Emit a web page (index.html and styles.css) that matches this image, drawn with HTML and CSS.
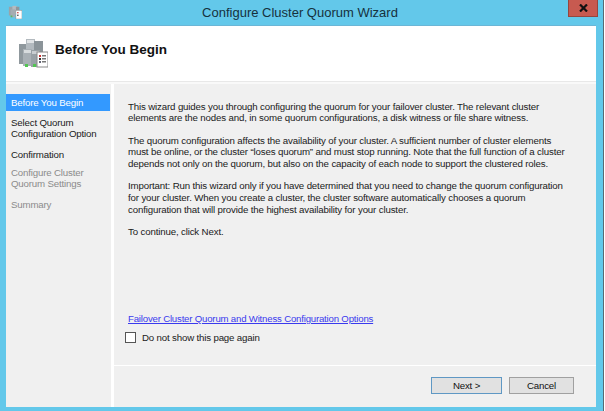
FILE: index.html
```html
<!DOCTYPE html>
<html lang="en">
<head>
<meta charset="utf-8">
<title>Configure Cluster Quorum Wizard</title>
<link rel="stylesheet" href="styles.css">
</head>
<body>
<div class="window">
  <div class="titlebar">
    <svg class="app-icon" width="14" height="14" viewBox="0 0 16 16">
      <rect x="1" y="2" width="5" height="10" fill="#9aa3a8"/>
      <rect x="5" y="1" width="5" height="10" fill="#b4bbc0"/>
      <rect x="9" y="2" width="4" height="8" fill="#8e979c"/>
      <rect x="3" y="5" width="5" height="9" fill="#a5adb2"/>
      <rect x="3" y="12" width="2" height="2" fill="#5cb85c"/>
      <rect x="9" y="6" width="7" height="10" fill="#fff" stroke="#888" stroke-width=".6"/>
      <rect x="10.5" y="8" width="1.5" height="1.5" fill="#c33"/>
      <rect x="10.5" y="11" width="1.5" height="1.5" fill="#333"/>
    </svg>
    <div class="title">Configure Cluster Quorum Wizard</div>
    <div class="close">
      <svg width="9" height="8" viewBox="0 0 9 8"><path d="M1 0.5 L8 7.5 M8 0.5 L1 7.5" stroke="#111" stroke-width="2.2"/></svg>
    </div>
  </div>
  <div class="client">
    <header class="header">
      <svg class="hero-icon" width="30" height="30" viewBox="0 0 30 30">
        <rect x="1" y="6" width="8" height="20" fill="#8f989d"/>
        <rect x="8" y="1" width="9" height="20" fill="#b3babf"/>
        <rect x="9" y="2" width="7" height="3" fill="#e0e3e5"/>
        <rect x="16" y="3" width="9" height="18" fill="#8b9499"/>
        <rect x="5" y="11" width="9" height="17" fill="#a9b0b5"/>
        <rect x="6" y="12" width="7" height="3" fill="#d8dcde"/>
        <rect x="13" y="12" width="9" height="17" fill="#98a1a6"/>
        <rect x="14" y="13" width="7" height="3" fill="#c9ced1"/>
        <rect x="7" y="26" width="3" height="3" fill="#52c452"/>
        <rect x="15" y="26" width="3" height="3" fill="#52c452"/>
        <rect x="19" y="14" width="11" height="15" fill="#fff" stroke="#8a8a8a"/>
        <rect x="21" y="17" width="2" height="2" fill="#c33"/>
        <rect x="24" y="17" width="4" height="1.5" fill="#777"/>
        <rect x="21" y="20" width="2" height="2" fill="#333"/>
        <rect x="24" y="20" width="4" height="1.5" fill="#777"/>
        <rect x="21" y="23" width="2" height="2" fill="#667"/>
        <rect x="24" y="23" width="4" height="1.5" fill="#777"/>
      </svg>
      <h1 class="heading">Before You Begin</h1>
    </header>
    <div class="body">
      <nav class="nav">
        <div class="step selected">Before You Begin</div>
        <div class="step wide">Select Quorum<br>Configuration Option</div>
        <div class="step">Confirmation</div>
        <div class="step wide disabled">Configure Cluster<br>Quorum Settings</div>
        <div class="step disabled">Summary</div>
      </nav>
      <div class="main">
        <div class="content">
          <div class="copy">
            <p>This wizard guides you through configuring the quorum for your failover cluster. The relevant cluster<br>elements are the nodes and, in some quorum configurations, a disk witness or file share witness.</p>
            <p>The quorum configuration affects the availability of your cluster. A sufficient number of cluster elements<br>must be online, or the cluster “loses quorum” and must stop running. Note that the full function of a cluster<br>depends not only on the quorum, but also on the capacity of each node to support the clustered roles.</p>
            <p>Important: Run this wizard only if you have determined that you need to change the quorum configuration<br>for your cluster. When you create a cluster, the cluster software automatically chooses a quorum<br>configuration that will provide the highest availability for your cluster.</p>
            <p>To continue, click Next.</p>
          </div>
          <a class="link" href="#">Failover Cluster Quorum and Witness Configuration Options</a>
          <label class="check"><span class="box"></span>Do not show this page again</label>
        </div>
        <footer class="footer">
          <button class="btn primary">Next &gt;</button>
          <button class="btn">Cancel</button>
        </footer>
      </div>
    </div>
  </div>
</div>
</body>
</html>
```
FILE: styles.css
```css
* { box-sizing: border-box; }
html, body { margin: 0; padding: 0; }
body { width: 605px; height: 411px; overflow: hidden; background: #fff; font-family: "Liberation Sans", Arial, sans-serif; font-size: 10px; color: #1a1a1a; }
.window { width: 604px; height: 411px; background: #63c8ea; border-right: 1px solid #5a6a72; padding: 0 7px 4px 6px; display: flex; flex-direction: column; }
.titlebar { height: 25px; flex: none; display: flex; align-items: flex-start; margin-right: -2px; }
.app-icon { margin: 5px 0 0 2px; flex: none; }
.title { flex: 1; text-align: center; font-size: 13px; line-height: 26px; color: #16313d; padding-left: 10px; }
.close { width: 30px; height: 17px; flex: none; background: #c75a50; border: 1px solid #96463e; border-top: none; display: flex; align-items: center; justify-content: center; }
.client { flex: 1; display: flex; flex-direction: column; min-height: 0; border-top: 1px solid #6bb6d6; background: #f0f0f0; }
.header { height: 56px; flex: none; background: #fff; border-bottom: 1px solid #e8e8e8; display: flex; align-items: center; padding: 0 0 0 12px; }
.hero-icon { flex: none; margin-bottom: 1px; }
.heading { margin: 0 0 0 7px; font-size: 13.5px; font-weight: 700; color: #111; line-height: 1; padding-bottom: 7px; }
.body { flex: 1; display: flex; min-height: 0; border-top: 2px solid #f9f9f9; }
.nav { width: 105px; flex: none; padding-top: 10px; font-size: 9.7px; letter-spacing: -0.17px; line-height: 11.5px; }
.step { padding: 0 5px; margin-bottom: 6.5px; }
.step.wide { margin-bottom: 9px; }
.step.selected { background: #3399ff; color: #fff; height: 17px; line-height: 17px; margin: 0 1px 5.5px 0; }
.step.disabled { color: #8b8b8b; }
.main { flex: 1; display: flex; flex-direction: column; border-left: 3px solid #fff; min-width: 0; }
.content { flex: 1; padding: 16.5px 0 0 14px; display: flex; flex-direction: column; border-bottom: 1px solid #fff; }
.copy { flex: 1; }
.copy p { margin: 0 0 11px; font-size: 9.7px; letter-spacing: -0.15px; line-height: 11.6px; white-space: nowrap; }
.link { color: #3a3aee; font-size: 9.6px; letter-spacing: -0.18px; line-height: 12px; text-decoration: underline; }
.check { display: flex; align-items: center; margin: 6px 0 21px -3px; font-size: 9.7px; letter-spacing: -0.17px; line-height: 13px; }
.box { width: 11px; height: 11px; background: #fff; border: 1px solid #555; margin-right: 6px; flex: none; }
.footer { height: 41px; flex: none; display: flex; justify-content: flex-end; align-items: flex-start; gap: 7px; padding: 11px 22px 0 0; }
.btn { width: 65px; height: 17px; padding: 0; background: #e1e1e1; border: 1px solid #a0a0a0; font: 9.7px/15px "Liberation Sans", Arial, sans-serif; letter-spacing: -0.17px; color: #111; }
.btn.primary { width: 71px; border-color: #5f98c4; }
```
